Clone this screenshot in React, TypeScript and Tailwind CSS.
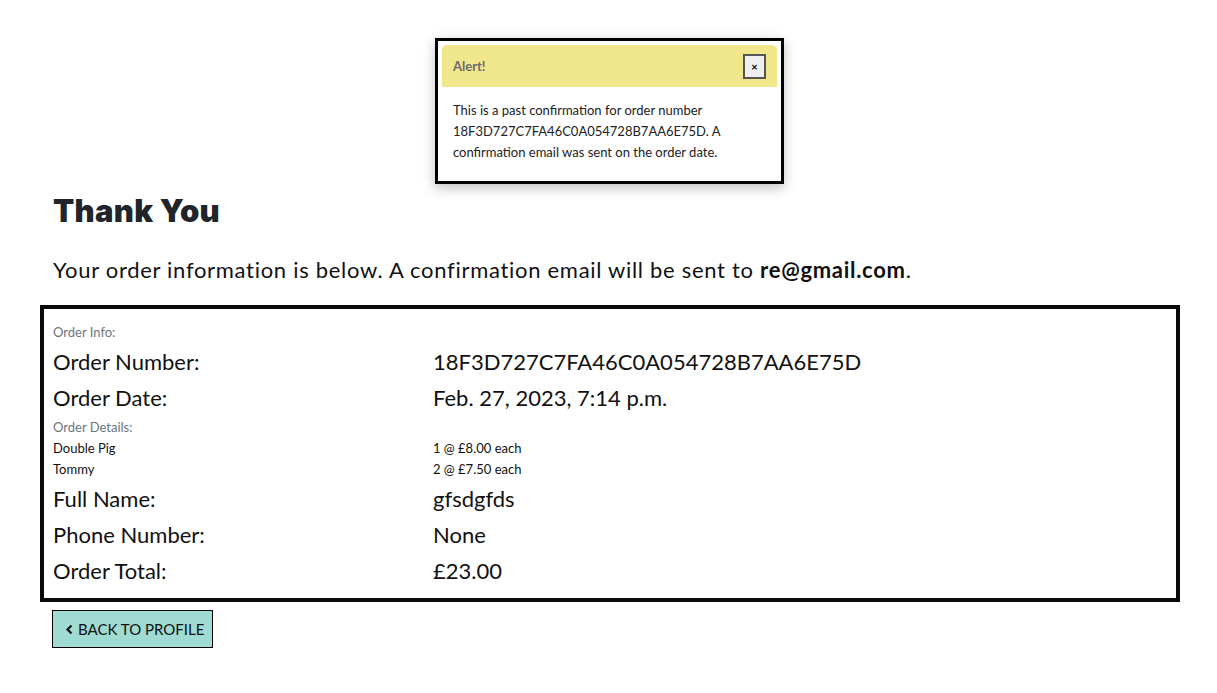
import React from "react";

const font = { fontFamily: "Lato, 'Noto Sans', sans-serif" };

function BigRow({ label, value }: { label: string; value: string }) {
  return (
    <div className="flex h-[36px] items-center text-[22px] text-[#111]">
      <div className="w-[380px]">{label}</div>
      <div>{value}</div>
    </div>
  );
}

function SmallRow({ label, value }: { label: string; value: string }) {
  return (
    <div className="flex h-[21px] items-center text-[13px] text-[#111]">
      <div className="w-[380px]">{label}</div>
      <div>{value}</div>
    </div>
  );
}

export default function App() {
  return (
    <div className="min-h-[693px] bg-white text-[#212529]" style={font}>
      <div className="flex justify-center pt-[38px]">
        <div className="ml-[2px] w-[349px] border-[3px] border-black bg-white p-[4px] shadow-[0_4px_12px_rgba(0,0,0,0.25)]">
          <div className="flex h-[42px] items-center justify-between rounded-t-[5px] bg-[#f0e68c] pl-[11px] pr-[11px]">
            <span className="mt-[1px] text-[13px] font-bold text-[#6c6c6c]">Alert!</span>
            <button className="flex h-[25px] w-[23px] items-center justify-center border-2 border-[#555] bg-[#efefef] text-[11px] font-bold leading-none text-black">
              ×
            </button>
          </div>
          <div className="px-[11px] pb-[14px] pt-[13px] text-[13px] leading-[21px] text-[#222]">
            This is a past confirmation for order number 18F3D727C7FA46C0A054728B7AA6E75D. A confirmation email was sent on the order date.
          </div>
        </div>
      </div>

      <div className="ml-[40px] w-[1140px] px-[13px] pt-[9px]">
        <h1
          className="text-[31px] font-black leading-[36px] tracking-[0.3px] text-[#212529]"
          style={{ fontFamily: "Inter, Lato, sans-serif" }}
        >
          Thank You
        </h1>
        <p className="mt-[27px] text-[22px] leading-[28px] tracking-[0.7px] text-[#111]">
          Your order information is below. A confirmation email will be sent to <b>re@gmail.com</b>.
        </p>
      </div>

      <div className="ml-[40px] mt-[21px] w-[1140px] border-4 border-[#0a0a0a] px-[9px] pb-[10px] pt-[13px]">
        <div className="flex h-[21px] items-center text-[13px] text-[#6c757d]">Order Info:</div>
        <BigRow label="Order Number:" value="18F3D727C7FA46C0A054728B7AA6E75D" />
        <BigRow label="Order Date:" value="Feb. 27, 2023, 7:14 p.m." />
        <div className="mt-[2px] flex h-[21px] items-center text-[13px] text-[#6c757d]">Order Details:</div>
        <SmallRow label="Double Pig" value="1 @ £8.00 each" />
        <SmallRow label="Tommy" value="2 @ £7.50 each" />
        <BigRow label="Full Name:" value="gfsdgfds" />
        <BigRow label="Phone Number:" value="None" />
        <BigRow label="Order Total:" value="£23.00" />
      </div>

      <div className="ml-[40px] w-[1140px] px-[12px] pt-[8px]">
        <button className="flex h-[38px] w-[161px] items-center gap-[4px] border border-black bg-[#9fdad3] pl-[12px] text-[15px] text-[#111]">
          <svg width="9" height="11" viewBox="0 0 9 11" fill="none">
            <path d="M6.5 1.5 L2.5 5.5 L6.5 9.5" stroke="#111" strokeWidth="2.2" />
          </svg>
          BACK TO PROFILE
        </button>
      </div>
    </div>
  );
}
